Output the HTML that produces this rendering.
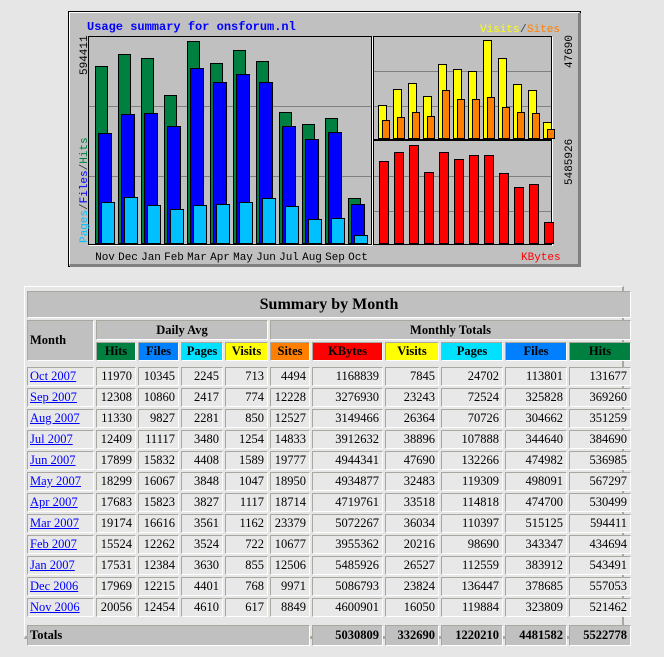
<!DOCTYPE html>
<html><head><meta charset="utf-8"><style>
body{margin:0;background:#e6e6e6;width:664px;height:657px;overflow:hidden;position:relative;font-family:"Liberation Serif",serif}
svg{position:absolute;left:0;top:0}
.frame{position:absolute;left:24px;top:286px;width:597px;height:349px;border:1px solid #fff;border-right:2px solid #a8a8a0;border-bottom:3px solid #a8a8a0;background:#e6e6e6}
table{position:absolute;left:25px;top:289px;border-spacing:2px;table-layout:fixed;width:598px;font-size:12.5px}
td,th{box-sizing:border-box;border:1px solid #fff;border-top-color:#a8a8a0;border-left-color:#a8a8a0;padding:0 3px;background:#e8e8e8;height:19px;text-align:right;white-space:nowrap;overflow:hidden}
th{background:#c0c0c0;text-align:center;font-weight:bold}
td.m{text-align:left;padding-left:2px}
td.m a{color:#0000ff;text-decoration:underline}
.sp td{height:2px;border:0;background:none;padding:0}
.tot th{text-align:right;height:21px}
</style></head><body>
<svg width="664" height="280" shape-rendering="crispEdges" font-family="Liberation Mono, DejaVu Sans Mono, monospace">
<rect x="68.5" y="11.5" width="512" height="255" fill="#c0c0c0" stroke="#000"/>
<line x1="69" y1="12.5" x2="579" y2="12.5" stroke="#fff"/><line x1="69.5" y1="12" x2="69.5" y2="264" stroke="#fff"/>
<rect x="70" y="264" width="511" height="3" fill="#808080"/><rect x="578" y="13" width="3" height="254" fill="#808080"/>
<text x="87" y="30" font-size="12" font-weight="bold" fill="#0000ff">Usage summary for onsforum.nl</text>
<text x="480" y="32" font-size="11" fill="#ffff00">Visits</text><text x="520" y="32" font-size="11" fill="#404040">/</text><text x="527" y="32" font-size="11" fill="#ff8000">Sites</text>
<text x="521" y="260" font-size="11" fill="#ff0000">KBytes</text>
<g fill="none"><rect x="88.5" y="36.5" width="283" height="208" stroke="#000"/><rect x="373.5" y="36.5" width="178" height="103" stroke="#000"/><rect x="373.5" y="140.5" width="178" height="104" stroke="#000"/></g>
<line x1="89" y1="245.5" x2="372" y2="245.5" stroke="#fff"/><line x1="372.5" y1="37" x2="372.5" y2="245" stroke="#fff"/><line x1="552.5" y1="37" x2="552.5" y2="246" stroke="#fff"/>
<g stroke="#808080"><line x1="89" y1="106.5" x2="371" y2="106.5"/><line x1="89" y1="176.5" x2="371" y2="176.5"/><line x1="374" y1="71.5" x2="551" y2="71.5"/><line x1="374" y1="106.5" x2="551" y2="106.5"/><line x1="374" y1="176.5" x2="551" y2="176.5"/><line x1="374" y1="211.5" x2="551" y2="211.5"/></g>
<g stroke="#000" transform="translate(.5 .5)">
<g fill="#008040"><rect x="95" y="66" width="12" height="177"/><rect x="118" y="54" width="12" height="189"/><rect x="141" y="58" width="12" height="185"/><rect x="164" y="95" width="12" height="148"/><rect x="187" y="41" width="12" height="202"/><rect x="210" y="63" width="12" height="180"/><rect x="233" y="50" width="12" height="193"/><rect x="256" y="61" width="12" height="182"/><rect x="279" y="112" width="12" height="131"/><rect x="302" y="124" width="12" height="119"/><rect x="325" y="118" width="12" height="125"/><rect x="348" y="198" width="12" height="45"/></g>
<g fill="#0000ff"><rect x="98" y="133" width="13" height="110"/><rect x="121" y="114" width="13" height="129"/><rect x="144" y="113" width="13" height="130"/><rect x="167" y="126" width="13" height="117"/><rect x="190" y="68" width="13" height="175"/><rect x="213" y="82" width="13" height="161"/><rect x="236" y="74" width="13" height="169"/><rect x="259" y="82" width="13" height="161"/><rect x="282" y="126" width="13" height="117"/><rect x="305" y="139" width="13" height="104"/><rect x="328" y="132" width="13" height="111"/><rect x="351" y="204" width="13" height="39"/></g>
<g fill="#00c0ff"><rect x="101" y="202" width="13" height="41"/><rect x="124" y="197" width="13" height="46"/><rect x="147" y="205" width="13" height="38"/><rect x="170" y="209" width="13" height="34"/><rect x="193" y="205" width="13" height="38"/><rect x="216" y="204" width="13" height="39"/><rect x="239" y="202" width="13" height="41"/><rect x="262" y="198" width="13" height="45"/><rect x="285" y="206" width="13" height="37"/><rect x="308" y="219" width="13" height="24"/><rect x="331" y="218" width="13" height="25"/><rect x="354" y="235" width="13" height="8"/></g>
<g fill="#ffff00"><rect x="378" y="105" width="8" height="33"/><rect x="393" y="89" width="8" height="49"/><rect x="408" y="83" width="8" height="55"/><rect x="423" y="96" width="8" height="42"/><rect x="438" y="64" width="8" height="74"/><rect x="453" y="69" width="8" height="69"/><rect x="468" y="71" width="8" height="67"/><rect x="483" y="40" width="8" height="98"/><rect x="498" y="58" width="8" height="80"/><rect x="513" y="84" width="8" height="54"/><rect x="528" y="90" width="8" height="48"/><rect x="543" y="122" width="8" height="16"/></g>
<g fill="#ff8000"><rect x="382" y="120" width="7" height="18"/><rect x="397" y="117" width="7" height="21"/><rect x="412" y="112" width="7" height="26"/><rect x="427" y="116" width="7" height="22"/><rect x="442" y="90" width="7" height="48"/><rect x="457" y="99" width="7" height="39"/><rect x="472" y="99" width="7" height="39"/><rect x="487" y="97" width="7" height="41"/><rect x="502" y="107" width="7" height="31"/><rect x="517" y="112" width="7" height="26"/><rect x="532" y="113" width="7" height="25"/><rect x="547" y="129" width="7" height="9"/></g>
<g fill="#ff0000"><rect x="379" y="161" width="9" height="82"/><rect x="394" y="152" width="9" height="91"/><rect x="409" y="145" width="9" height="98"/><rect x="424" y="172" width="9" height="71"/><rect x="439" y="152" width="9" height="91"/><rect x="454" y="159" width="9" height="84"/><rect x="469" y="155" width="9" height="88"/><rect x="484" y="155" width="9" height="88"/><rect x="499" y="173" width="9" height="70"/><rect x="514" y="187" width="9" height="56"/><rect x="529" y="184" width="9" height="59"/><rect x="544" y="222" width="9" height="21"/></g>
</g>
<g font-size="11" fill="#000" text-anchor="middle"><text x="105" y="260">Nov</text><text x="128" y="260">Dec</text><text x="151" y="260">Jan</text><text x="174" y="260">Feb</text><text x="197" y="260">Mar</text><text x="220" y="260">Apr</text><text x="243" y="260">May</text><text x="266" y="260">Jun</text><text x="289" y="260">Jul</text><text x="312" y="260">Aug</text><text x="335" y="260">Sep</text><text x="358" y="260">Oct</text></g>
<g font-size="11"><text transform="translate(87 75) rotate(-90)">594411</text><text transform="translate(87 243) rotate(-90)"><tspan fill="#00c0ff">Pages</tspan><tspan fill="#404040">/</tspan><tspan fill="#0000ff">Files</tspan><tspan fill="#404040">/</tspan><tspan fill="#008040">Hits</tspan></text>
<text transform="translate(572 68) rotate(-90)">47690</text><text transform="translate(572 185) rotate(-90)">5485926</text></g>
</svg>
<div class="frame"></div>
<table>
<colgroup><col style="width:67px"><col style="width:40px"><col style="width:41px"><col style="width:42px"><col style="width:43px"><col style="width:40px"><col style="width:71px"><col style="width:54px"><col style="width:62px"><col style="width:62px"><col style="width:62px"></colgroup>
<tr><th colspan="11" style="font-size:16px;height:27px">Summary by Month</th></tr>
<tr><th rowspan="2" style="text-align:left;padding-left:2px">Month</th><th colspan="4" style="height:20px">Daily Avg</th><th colspan="6">Monthly Totals</th></tr>
<tr><th style="background:#008040">Hits</th><th style="background:#0080ff">Files</th><th style="background:#00e0ff">Pages</th><th style="background:#ffff00">Visits</th><th style="background:#ff8000">Sites</th><th style="background:#ff0000">KBytes</th><th style="background:#ffff00">Visits</th><th style="background:#00e0ff">Pages</th><th style="background:#0080ff">Files</th><th style="background:#008040">Hits</th></tr>
<tr class="sp"><td colspan="11"></td></tr>
<tr><td class="m"><a>Oct 2007</a></td><td>11970</td><td>10345</td><td>2245</td><td>713</td><td>4494</td><td>1168839</td><td>7845</td><td>24702</td><td>113801</td><td>131677</td></tr>
<tr><td class="m"><a>Sep 2007</a></td><td>12308</td><td>10860</td><td>2417</td><td>774</td><td>12228</td><td>3276930</td><td>23243</td><td>72524</td><td>325828</td><td>369260</td></tr>
<tr><td class="m"><a>Aug 2007</a></td><td>11330</td><td>9827</td><td>2281</td><td>850</td><td>12527</td><td>3149466</td><td>26364</td><td>70726</td><td>304662</td><td>351259</td></tr>
<tr><td class="m"><a>Jul 2007</a></td><td>12409</td><td>11117</td><td>3480</td><td>1254</td><td>14833</td><td>3912632</td><td>38896</td><td>107888</td><td>344640</td><td>384690</td></tr>
<tr><td class="m"><a>Jun 2007</a></td><td>17899</td><td>15832</td><td>4408</td><td>1589</td><td>19777</td><td>4944341</td><td>47690</td><td>132266</td><td>474982</td><td>536985</td></tr>
<tr><td class="m"><a>May 2007</a></td><td>18299</td><td>16067</td><td>3848</td><td>1047</td><td>18950</td><td>4934877</td><td>32483</td><td>119309</td><td>498091</td><td>567297</td></tr>
<tr><td class="m"><a>Apr 2007</a></td><td>17683</td><td>15823</td><td>3827</td><td>1117</td><td>18714</td><td>4719761</td><td>33518</td><td>114818</td><td>474700</td><td>530499</td></tr>
<tr><td class="m"><a>Mar 2007</a></td><td>19174</td><td>16616</td><td>3561</td><td>1162</td><td>23379</td><td>5072267</td><td>36034</td><td>110397</td><td>515125</td><td>594411</td></tr>
<tr><td class="m"><a>Feb 2007</a></td><td>15524</td><td>12262</td><td>3524</td><td>722</td><td>10677</td><td>3955362</td><td>20216</td><td>98690</td><td>343347</td><td>434694</td></tr>
<tr><td class="m"><a>Jan 2007</a></td><td>17531</td><td>12384</td><td>3630</td><td>855</td><td>12506</td><td>5485926</td><td>26527</td><td>112559</td><td>383912</td><td>543491</td></tr>
<tr><td class="m"><a>Dec 2006</a></td><td>17969</td><td>12215</td><td>4401</td><td>768</td><td>9971</td><td>5086793</td><td>23824</td><td>136447</td><td>378685</td><td>557053</td></tr>
<tr><td class="m"><a>Nov 2006</a></td><td>20056</td><td>12454</td><td>4610</td><td>617</td><td>8849</td><td>4600901</td><td>16050</td><td>119884</td><td>323809</td><td>521462</td></tr>
<tr class="sp"><td colspan="11" style="height:4px"></td></tr>
<tr class="tot"><th colspan="6" style="text-align:left;padding-left:2px">Totals</th><th>5030809</th><th>332690</th><th>1220210</th><th>4481582</th><th>5522778</th></tr>
</table>
</body></html>
